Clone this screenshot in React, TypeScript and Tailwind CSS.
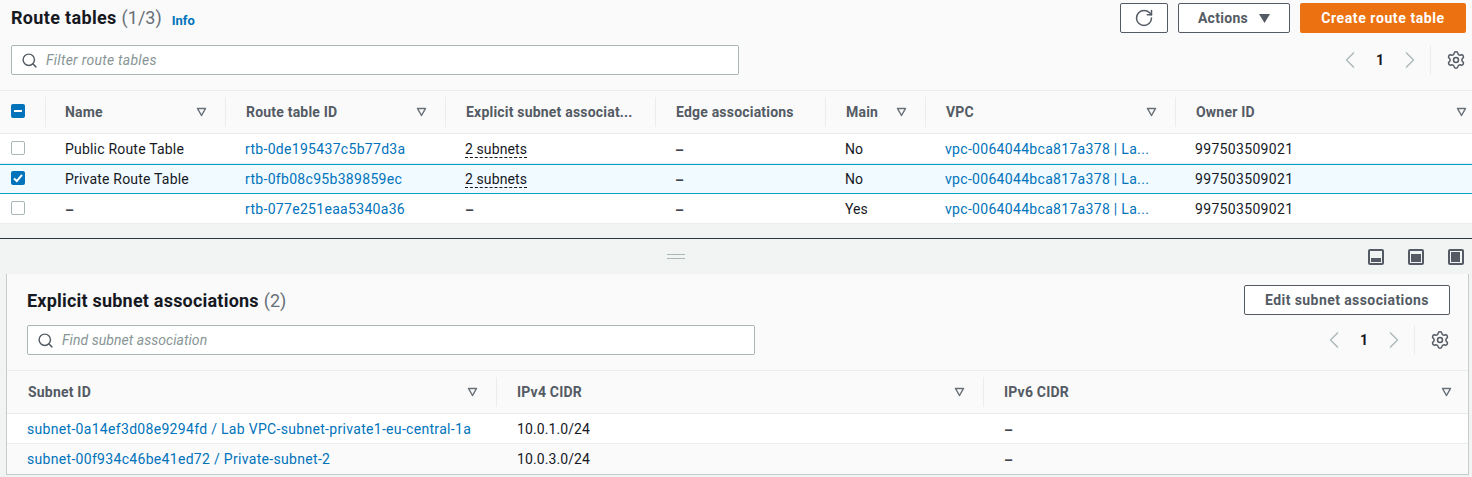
import { ReactNode } from "react";
import { RotateCw, Search, Settings } from "lucide-react";

const ink = "text-[#16191f]";
const link = "text-[#0073bb] tracking-[0.31px]";

const SortIcon = () => (
  <svg width="11" height="10" viewBox="0 0 11 10" className="shrink-0">
    <path d="M1.5 1.5h8L5.5 8.5z" fill="none" stroke="#687078" strokeWidth="1.5" strokeLinejoin="round" />
  </svg>
);

const HeadCell = ({ label, width, sort = true, last = "" }: { label: string; width: string; sort?: boolean; last?: string }) => (
  <div className={`${width} h-full flex items-center`}>
    <div className={`flex-1 min-w-0 h-[30px] flex items-center justify-between pl-5 ${last || "pr-[18px] border-r border-[#eaeded]"}`}>
      <span className="font-bold text-[#545b64] tracking-[0.2px] whitespace-nowrap">{label}</span>
      {sort && <SortIcon />}
    </div>
  </div>
);

const Cell = ({ width, children, className = "" }: { width: string; children: ReactNode; className?: string }) => (
  <div className={`${width} pl-5 whitespace-nowrap ${className}`}>{children}</div>
);

const Dash = () => <span className="inline-block translate-y-[1px] font-bold text-[#414750]">–</span>;

const Chevron = ({ d }: { d: string }) => (
  <svg width="10" height="16" viewBox="0 0 10 16">
    <path d={d} fill="none" stroke="#aab7b8" strokeWidth="1.4" />
  </svg>
);

const Pager = () => (
  <div className="flex items-center h-[30px]">
    <Chevron d="M9 0.5L1.5 8L9 15.5" />
    <span className={`w-[50px] text-center font-bold ${ink}`}>1</span>
    <Chevron d="M1 0.5L8.5 8L1 15.5" />
    <div className="w-px h-[30px] bg-[#eaeded] ml-[15px] mr-[15px]" />
    <Settings size={20} strokeWidth={1.8} className="text-[#545b64]" />
  </div>
);

const SearchBox = ({ placeholder, spacing }: { placeholder: string; spacing: string }) => (
  <div className="w-[728px] h-[30px] bg-white border border-[#aab7b8] rounded-[2px] flex items-center pl-[9px] gap-[8px]">
    <Search size={17} strokeWidth={2} className="text-[#545b64]" />
    <span className={`italic text-[#879596] ${spacing}`}>{placeholder}</span>
  </div>
);

const Box = ({ checked }: { checked?: "yes" | "some" }) =>
  checked ? (
    <div className="w-[14px] h-[14px] rounded-[2px] bg-[#0073bb] flex items-center justify-center">
      <svg width="14" height="14" viewBox="0 0 14 14">
        {checked === "yes" ? (
          <path d="M3 7.5l2.8 2.6L11 3.8" fill="none" stroke="#fff" strokeWidth="2" />
        ) : (
          <path d="M3 7h8" fill="none" stroke="#fff" strokeWidth="2" />
        )}
      </svg>
    </div>
  ) : (
    <div className="w-[14px] h-[14px] rounded-[2px] bg-white border border-[#aab7b8]" />
  );

const PanelIcon = ({ mode }: { mode: number }) => (
  <svg width="16" height="16" viewBox="0 0 16 16">
    <rect x="1" y="1" width="14" height="14" rx="1" fill="#f2f3f3" stroke="#545b64" strokeWidth="2" />
    {mode === 0 && <rect x="3" y="9" width="10" height="4" fill="#545b64" />}
    {mode === 1 && <rect x="3" y="5" width="10" height="8" fill="#545b64" />}
    {mode === 2 && <rect x="3" y="3" width="9" height="10" fill="#545b64" />}
  </svg>
);

const rows = [
  { box: undefined, name: "Public Route Table", id: "rtb-0de195437c5b77d3a", subnets: true, main: "No" },
  { box: "yes" as const, name: "Private Route Table", id: "rtb-0fb08c95b389859ec", subnets: true, main: "No" },
  { box: undefined, name: "", id: "rtb-077e251eaa5340a36", subnets: false, main: "Yes" },
];

const App = () => {
  return (
    <div className={`w-[1472px] h-[477px] overflow-hidden bg-[#f2f3f3] text-[14px] leading-[20px] ${ink} font-['Roboto',sans-serif]`}>
      <div className="bg-[#fafafa]">
        <div className="h-[91px] border-b border-[#eaeded] pl-[11px] pr-[6px] flex justify-between">
          <div>
            <div className="h-[36px] flex items-center">
              <h1 className="text-[18px] font-bold tracking-[0.33px]">Route tables</h1>
              <span className="text-[18px] text-[#687078] ml-[5px]">(1/3)</span>
              <span className="text-[13px] font-bold ml-[10px] mt-[5px] text-[#0073bb]">Info</span>
            </div>
            <div className="mt-[9px]">
              <SearchBox placeholder="Filter route tables" spacing="tracking-[0.27px]" />
            </div>
          </div>
          <div className="flex flex-col items-end">
            <div className="flex gap-[10px] pt-[3px]">
              <div className="w-[48px] h-[30px] bg-white border border-[#545b64] rounded-[2px] flex items-center justify-center">
                <RotateCw size={20} strokeWidth={1.8} className="text-[#545b64]" />
              </div>
              <div className="w-[112px] h-[30px] bg-white border border-[#545b64] rounded-[2px] flex items-center justify-center gap-[11px] font-bold text-[#545b64] tracking-[0.3px]">
                Actions
                <svg width="11" height="9" viewBox="0 0 11 9"><path d="M0 0h11L5.5 9z" fill="#545b64" /></svg>
              </div>
              <div className="w-[166px] h-[30px] bg-[#ec7211] rounded-[2px] flex items-center justify-center font-bold text-white tracking-[0.6px]">
                Create route table
              </div>
            </div>
            <div className="mt-[12px]">
              <Pager />
            </div>
          </div>
        </div>
        <div className="h-[43px] flex border-b border-[#eaeded]">
          <div className="w-[46px] h-full flex items-center">
            <div className="flex-1 h-[30px] flex items-center pl-[11px] border-r border-[#eaeded]">
              <div className="mb-[2px]">
                <Box checked="some" />
              </div>
            </div>
          </div>
          <HeadCell label="Name" width="w-[181px] -ml-px" />
          <HeadCell label="Route table ID" width="w-[220px]" />
          <HeadCell label="Explicit subnet associat..." width="w-[210px]" sort={false} />
          <HeadCell label="Edge associations" width="w-[170px]" sort={false} />
          <HeadCell label="Main" width="w-[100px]" />
          <HeadCell label="VPC" width="w-[250px]" />
          <HeadCell label="Owner ID" width="flex-1" last="pr-[5px]" />
        </div>
      </div>
      {rows.map((r) => (
        <div
          key={r.id}
          className={`h-[30px] flex items-center ${
            r.box ? "bg-[#f1faff] border-y border-[#00a1c9]" : "bg-white border-b border-[#eaeded]"
          }`}
        >
          <div className={`w-[46px] pl-[11px] shrink-0 ${r.box ? "mb-[2px]" : "mb-[1px]"}`}>
            <Box checked={r.box} />
          </div>
          <Cell width="w-[181px] -ml-px" className="tracking-[0.2px]">{r.name || <Dash />}</Cell>
          <Cell width="w-[220px] -ml-px" className={link}>{r.id}</Cell>
          <Cell width="w-[210px]">
            {r.subnets ? <span className="border-b border-dashed border-[#16191f] tracking-[0.1px]">2 subnets</span> : <Dash />}
          </Cell>
          <Cell width="w-[170px]"><Dash /></Cell>
          <Cell width="w-[100px]">{r.main}</Cell>
          <Cell width="w-[250px]" className={link}>vpc-0064044bca817a378 | La...</Cell>
          <Cell width="flex-1" className="tracking-[0.33px]">997503509021</Cell>
        </div>
      ))}
      <div className="h-[15px] border-b border-[#2a3744]" />
      <div className="h-[35px] flex items-center pl-[667px] pr-[8px] justify-between">
        <div className="w-[18px] h-[5px] border-y border-[#aab7b8]" />
        <div className="flex gap-[24px]">
          <PanelIcon mode={0} />
          <PanelIcon mode={1} />
          <PanelIcon mode={2} />
        </div>
      </div>
      <div className="ml-[6px] mr-[3px] h-[201px] border-x border-b border-[#c4cccc] bg-[#fafafa]">
        <div className="h-[97px] border-b border-[#eaeded] pl-[20px] pr-[18px] flex justify-between">
          <div>
            <div className="h-[36px] mt-[9px] flex items-center">
              <h2 className="text-[18px] font-bold tracking-[0.21px]">Explicit subnet associations</h2>
              <span className="text-[18px] text-[#687078] ml-[5px]">(2)</span>
            </div>
            <div className="mt-[6px]">
              <SearchBox placeholder="Find subnet association" spacing="tracking-[0.05px]" />
            </div>
          </div>
          <div className="flex flex-col items-end">
            <div className="w-[206px] h-[30px] mt-[11px] bg-white border border-[#545b64] rounded-[2px] flex items-center justify-center font-bold text-[#545b64] tracking-[0.42px]">
              Edit subnet associations
            </div>
            <div className="mt-[10px]">
              <Pager />
            </div>
          </div>
        </div>
        <div className="h-[43px] flex border-b border-[#eaeded]">
          <div className="w-[490px] h-full flex items-center">
            <div className="flex-1 h-[30px] flex items-center justify-between pl-[21px] pr-[18px] border-r border-[#eaeded]">
              <span className="font-bold text-[#545b64] tracking-[0.2px]">Subnet ID</span>
              <SortIcon />
            </div>
          </div>
          <HeadCell label="IPv4 CIDR" width="w-[487px]" />
          <HeadCell label="IPv6 CIDR" width="flex-1" last="pr-[16px]" />
        </div>
        <div className="h-[30px] flex items-center bg-white border-b border-[#eaeded]">
          <div className={`w-[490px] pl-[20px] whitespace-nowrap ${link}`}>subnet-0a14ef3d08e9294fd / Lab VPC-subnet-private1-eu-central-1a</div>
          <Cell width="w-[487px]" className="tracking-[0.1px]">10.0.1.0/24</Cell>
          <Cell width="flex-1"><Dash /></Cell>
        </div>
        <div className="h-[30px] flex items-center">
          <div className={`w-[490px] pl-[20px] whitespace-nowrap ${link}`}>subnet-00f934c46be41ed72 / Private-subnet-2</div>
          <Cell width="w-[487px]" className="tracking-[0.1px]">10.0.3.0/24</Cell>
          <Cell width="flex-1"><Dash /></Cell>
        </div>
      </div>
    </div>
  );
};

export default App;
